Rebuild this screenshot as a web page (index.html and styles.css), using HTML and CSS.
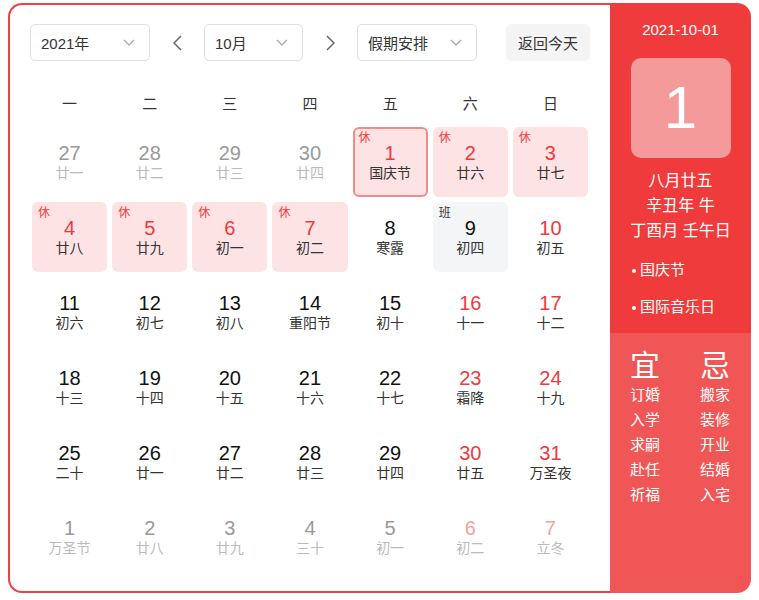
FILE: index.html
```html
<!DOCTYPE html>
<html lang="zh-CN">
<head>
    <meta charset="UTF-8">
    <title>万年历</title>
    <link rel="stylesheet" href="styles.css">
</head>
<body>
<div class="calendar">
    <div class="main">
        <div class="toolbar">
            <div class="select year">2021年
                <svg width="12" height="7" viewBox="0 0 12 7"><path d="M1 1l5 5 5-5" fill="none" stroke="#a8abb2" stroke-width="1.3"/></svg>
            </div>
            <div class="nav"><svg width="9" height="16" viewBox="0 0 9 16"><path d="M8 1L1 8l7 7" fill="none" stroke="#666" stroke-width="1.5"/></svg></div>
            <div class="select month">10月
                <svg width="12" height="7" viewBox="0 0 12 7"><path d="M1 1l5 5 5-5" fill="none" stroke="#a8abb2" stroke-width="1.3"/></svg>
            </div>
            <div class="nav"><svg width="9" height="16" viewBox="0 0 9 16"><path d="M1 1l7 7-7 7" fill="none" stroke="#666" stroke-width="1.5"/></svg></div>
            <div class="select holiday">假期安排
                <svg width="12" height="7" viewBox="0 0 12 7"><path d="M1 1l5 5 5-5" fill="none" stroke="#a8abb2" stroke-width="1.3"/></svg>
            </div>
            <div class="today-btn">返回今天</div>
        </div>

        <div class="week">
            <span>一</span><span>二</span><span>三</span><span>四</span><span>五</span><span>六</span><span>日</span>
        </div>

        <div class="days">
            <div class="day other"><span class="num">27</span><span class="lunar">廿一</span></div>
            <div class="day other"><span class="num">28</span><span class="lunar">廿二</span></div>
            <div class="day other"><span class="num">29</span><span class="lunar">廿三</span></div>
            <div class="day other"><span class="num">30</span><span class="lunar">廿四</span></div>
            <div class="day rest today"><span class="tag">休</span><span class="num">1</span><span class="lunar">国庆节</span></div>
            <div class="day rest"><span class="tag">休</span><span class="num">2</span><span class="lunar">廿六</span></div>
            <div class="day rest"><span class="tag">休</span><span class="num">3</span><span class="lunar">廿七</span></div>

            <div class="day rest"><span class="tag">休</span><span class="num">4</span><span class="lunar">廿八</span></div>
            <div class="day rest"><span class="tag">休</span><span class="num">5</span><span class="lunar">廿九</span></div>
            <div class="day rest"><span class="tag">休</span><span class="num">6</span><span class="lunar">初一</span></div>
            <div class="day rest"><span class="tag">休</span><span class="num">7</span><span class="lunar">初二</span></div>
            <div class="day"><span class="num">8</span><span class="lunar">寒露</span></div>
            <div class="day work"><span class="tag">班</span><span class="num">9</span><span class="lunar">初四</span></div>
            <div class="day weekend"><span class="num">10</span><span class="lunar">初五</span></div>

            <div class="day"><span class="num">11</span><span class="lunar">初六</span></div>
            <div class="day"><span class="num">12</span><span class="lunar">初七</span></div>
            <div class="day"><span class="num">13</span><span class="lunar">初八</span></div>
            <div class="day"><span class="num">14</span><span class="lunar">重阳节</span></div>
            <div class="day"><span class="num">15</span><span class="lunar">初十</span></div>
            <div class="day weekend"><span class="num">16</span><span class="lunar">十一</span></div>
            <div class="day weekend"><span class="num">17</span><span class="lunar">十二</span></div>

            <div class="day"><span class="num">18</span><span class="lunar">十三</span></div>
            <div class="day"><span class="num">19</span><span class="lunar">十四</span></div>
            <div class="day"><span class="num">20</span><span class="lunar">十五</span></div>
            <div class="day"><span class="num">21</span><span class="lunar">十六</span></div>
            <div class="day"><span class="num">22</span><span class="lunar">十七</span></div>
            <div class="day weekend"><span class="num">23</span><span class="lunar">霜降</span></div>
            <div class="day weekend"><span class="num">24</span><span class="lunar">十九</span></div>

            <div class="day"><span class="num">25</span><span class="lunar">二十</span></div>
            <div class="day"><span class="num">26</span><span class="lunar">廿一</span></div>
            <div class="day"><span class="num">27</span><span class="lunar">廿二</span></div>
            <div class="day"><span class="num">28</span><span class="lunar">廿三</span></div>
            <div class="day"><span class="num">29</span><span class="lunar">廿四</span></div>
            <div class="day weekend"><span class="num">30</span><span class="lunar">廿五</span></div>
            <div class="day weekend"><span class="num">31</span><span class="lunar">万圣夜</span></div>

            <div class="day other"><span class="num">1</span><span class="lunar">万圣节</span></div>
            <div class="day other"><span class="num">2</span><span class="lunar">廿八</span></div>
            <div class="day other"><span class="num">3</span><span class="lunar">廿九</span></div>
            <div class="day other"><span class="num">4</span><span class="lunar">三十</span></div>
            <div class="day other"><span class="num">5</span><span class="lunar">初一</span></div>
            <div class="day other weekend"><span class="num">6</span><span class="lunar">初二</span></div>
            <div class="day other weekend"><span class="num">7</span><span class="lunar">立冬</span></div>
        </div>
    </div>

    <div class="side">
        <div class="side-top">
            <div class="side-date">2021-10-01</div>
            <div class="big-day">1</div>
            <div class="side-lunar">
                <div>八月廿五</div>
                <div>辛丑年 牛</div>
                <div>丁酉月 壬午日</div>
            </div>
            <ul class="fest">
                <li>国庆节</li>
                <li>国际音乐日</li>
            </ul>
        </div>
        <div class="side-bottom">
            <div class="col">
                <div class="col-title">宜</div>
                <div>订婚</div>
                <div>入学</div>
                <div>求嗣</div>
                <div>赴任</div>
                <div>祈福</div>
            </div>
            <div class="col">
                <div class="col-title">忌</div>
                <div>搬家</div>
                <div>装修</div>
                <div>开业</div>
                <div>结婚</div>
                <div>入宅</div>
            </div>
        </div>
    </div>
</div>
</body>
</html>
```

FILE: styles.css
```css
body {
    margin: 0;
    padding: 3px 8px;
    background: #fff;
    font-family: "Liberation Sans", "Noto Sans CJK SC", sans-serif;
    color: #333;
}
.calendar {
    display: flex;
    width: 743px;
    height: 590px;
}
.main {
    flex: 0 0 602px;
    box-sizing: border-box;
    border: 2px solid #ee4242;
    border-right: none;
    border-radius: 14px 0 0 14px;
    padding: 19px 20px 0;
}
.toolbar {
    display: flex;
    align-items: center;
    height: 37px;
}
.select {
    height: 37px;
    box-sizing: border-box;
    border: 1px solid #dcdfe6;
    border-radius: 5px;
    display: flex;
    align-items: center;
    justify-content: space-between;
    padding: 0 14px 0 10px;
    font-size: 15px;
    color: #333;
}
.year { width: 120px; }
.month { width: 99px; }
.holiday { width: 120px; }
.nav {
    width: 54px;
    display: flex;
    justify-content: center;
}
.today-btn {
    margin-left: auto;
    width: 84px;
    height: 37px;
    background: #f4f4f5;
    border-radius: 5px;
    font-size: 15px;
    display: flex;
    align-items: center;
    justify-content: center;
}
.week {
    display: grid;
    grid-template-columns: repeat(7, 1fr);
    column-gap: 5px;
    margin: 21px 2px 5px;
    height: 40px;
    align-items: center;
    text-align: center;
    font-size: 15px;
}
.days {
    display: grid;
    grid-template-columns: repeat(7, 1fr);
    grid-auto-rows: 70px;
    gap: 5px;
    margin: 0 2px;
}
.day {
    position: relative;
    box-sizing: border-box;
    border-radius: 6px;
    display: flex;
    flex-direction: column;
    align-items: center;
    justify-content: center;
}
.num {
    font-size: 20px;
    line-height: 22px;
    color: #111;
}
.lunar {
    font-size: 14px;
    line-height: 18px;
    color: #333;
}
.weekend .num { color: #f0393c; }
.other .num { color: #999; }
.other .lunar { color: #bbb; }
.other.weekend .num { color: #f4a3a3; }
.rest { background: #fde3e4; }
.rest .num { color: #f0393c; }
.work { background: #f4f5f7; }
.today { border: 2px solid #f08b8b; }
.tag {
    position: absolute;
    left: 6px;
    top: 4px;
    font-size: 12px;
    line-height: 14px;
    color: #f03c3c;
}
.today .tag { left: 4px; top: 2px; }
.work .tag { color: #333; }

.side {
    flex: 0 0 141px;
    display: flex;
    flex-direction: column;
    border-radius: 0 14px 14px 0;
    overflow: hidden;
    color: #fff;
}
.side-top {
    flex: 0 0 330px;
    box-sizing: border-box;
    background: #ef3b3b;
    padding-top: 17px;
    text-align: center;
}
.side-date {
    font-size: 15px;
    line-height: 20px;
}
.big-day {
    width: 100px;
    height: 100px;
    margin: 18px auto 0;
    border-radius: 10px;
    background: #f59a9a;
    font-size: 60px;
    line-height: 100px;
}
.side-lunar {
    margin-top: 10px;
    font-size: 16px;
    line-height: 25px;
}
.fest {
    list-style: none;
    margin: 17px 0 0;
    padding: 0 0 0 20px;
    text-align: left;
    font-size: 15px;
    line-height: 20px;
    display: flex;
    flex-direction: column;
    gap: 17px;
}
.fest li::before {
    content: "";
    display: inline-block;
    width: 4px;
    height: 4px;
    border-radius: 50%;
    background: #fff;
    margin: 0 4px 0 2px;
    vertical-align: middle;
}
.side-bottom {
    flex: 1;
    background: #f05656;
    padding: 17px 0 0 20px;
    display: flex;
    font-size: 15px;
    line-height: 25px;
}
.col { flex: 0 0 70px; }
.col-title {
    font-size: 30px;
    line-height: 32px;
}
```
